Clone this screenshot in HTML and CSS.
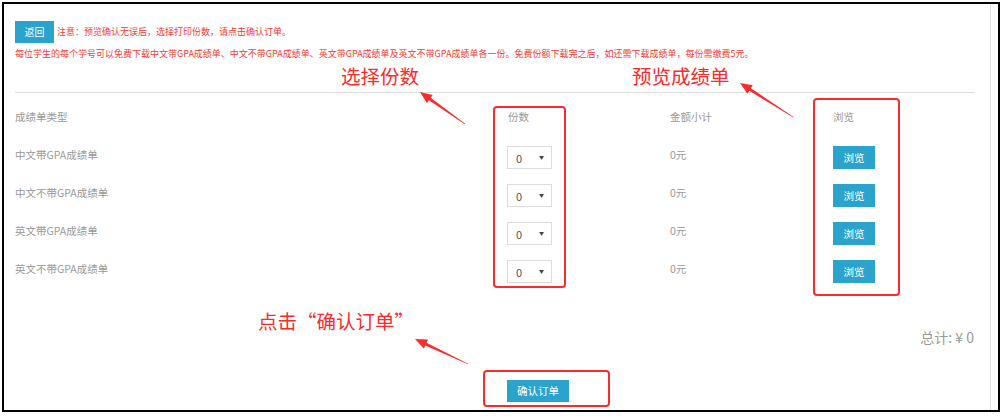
FILE: index.html
```html
<!DOCTYPE html>
<html lang="zh-CN">
<head>
	<meta charset="UTF-8">
	<title>成绩单订单</title>
	<link rel="stylesheet" href="styles.css">
</head>
<body>
	<div class="frame">
		<div class="page">
			<div class="top">
				<a class="btn back">返回</a>
				<span class="tip">注意：预览确认无误后，选择打印份数，请点击确认订单。</span>
			</div>
			<p class="tip notice">每位学生的每个学号可以免费下载中文带GPA成绩单、中文不带GPA成绩单、英文带GPA成绩单及英文不带GPA成绩单各一份。免费份额下载完之后，如还需下载成绩单，每份需缴费5元。</p>

			<div class="list">
				<div class="row head">
					<span>成绩单类型</span>
					<span class="num">份数</span>
					<span>金额小计</span>
					<span>浏览</span>
				</div>
				<div class="row">
					<span>中文带GPA成绩单</span>
					<div class="sel"><select><option>0</option><option>1</option><option>2</option></select></div>
					<span>0元</span>
					<div><a class="btn view">浏览</a></div>
				</div>
				<div class="row">
					<span>中文不带GPA成绩单</span>
					<div class="sel"><select><option>0</option><option>1</option><option>2</option></select></div>
					<span>0元</span>
					<div><a class="btn view">浏览</a></div>
				</div>
				<div class="row">
					<span>英文带GPA成绩单</span>
					<div class="sel"><select><option>0</option><option>1</option><option>2</option></select></div>
					<span>0元</span>
					<div><a class="btn view">浏览</a></div>
				</div>
				<div class="row">
					<span>英文不带GPA成绩单</span>
					<div class="sel"><select><option>0</option><option>1</option><option>2</option></select></div>
					<span>0元</span>
					<div><a class="btn view">浏览</a></div>
				</div>
			</div>

			<div class="total">总计: ¥ 0</div>
			<div class="submit"><a class="btn confirm">确认订单</a></div>
		</div>

		<!-- 标注层 -->
		<div class="mark m1">选择份数</div>
		<div class="mark m2">预览成绩单</div>
		<div class="mark m3">点击“确认订单”</div>
		<svg class="marks" width="994" height="406" viewBox="4 4 994 406">
			<g fill="none" stroke="#f82c2c" stroke-width="2">
				<rect x="494" y="107" width="71" height="180" rx="3"/>
				<rect x="814" y="99" width="85" height="196" rx="3"/>
				<rect x="484" y="371" width="125" height="35" rx="3"/>
			</g>
			<g fill="#f82c2c">
				<polygon points="465.2,123.8 430.7,97.8 432.7,94.9 420,92 426.9,103.1 428.9,100.2 464.8,124.2"/>
				<polygon points="793.2,116.7 750.9,88.2 752.8,85.3 740,83 747.4,93.7 749.3,90.8 792.8,117.3"/>
				<polygon points="468.1,363.7 426.5,342.7 428,339.6 415,339 423.8,348.6 425.3,345.5 467.9,364.3"/>
			</g>
		</svg>
	</div>
</body>
</html>
```

FILE: styles.css
```css
*{
	margin: 0;
	padding: 0;
	box-sizing: border-box;
}
body{
	font-family: "Noto Sans CJK SC", "Noto Sans", sans-serif;
	background: #ffffff;
}
/*外框*/
.frame{
	width: 998px;
	height: 410px;
	margin: 2px;
	border: 2px solid #000000;
	position: relative;
	overflow: hidden;
}
.page{
	width: 987px;
	height: 100%;
	border-right: 1px solid #e3e3e3;
	padding: 17px 16px 0 11px;
}
/*按钮公共样式*/
.btn{
	display: block;
	background: #2aa4cd;
	color: #ffffff;
	text-align: center;
	cursor: pointer;
}
.top{
	display: flex;
	align-items: center;
}
.back{
	width: 39px;
	height: 22px;
	line-height: 22px;
	font-size: 10px;
}
.tip{
	color: #f63a35;
	font-size: 9px;
	line-height: 12px;
}
.top .tip{
	margin-left: 3px;
}
.notice{
	margin-top: 5px;
	padding-bottom: 32px;
	border-bottom: 1px solid #dddddd;
}
/*列表*/
.list{
	margin-top: 5px;
}
.row{
	display: grid;
	grid-template-columns: 492px 163px 163px 1fr;
	align-items: center;
	height: 38px;
	font-size: 10.5px;
	line-height: 1;
	color: #999999;
}
.row.head .num{
	padding-left: 1px;
}
.sel{
	position: relative;
	width: 45px;
	height: 23px;
	margin-top: 5px;
}
.sel select{
	appearance: none;
	-webkit-appearance: none;
	width: 45px;
	height: 23px;
	border: 1px solid #dddddd;
	background: #ffffff;
	padding-left: 8px;
	font-family: inherit;
	font-size: 11px;
	color: #555555;
	outline: none;
}
/*下拉小三角*/
.sel::after{
	content: "▼";
	position: absolute;
	right: 8px;
	top: 8px;
	font-size: 5px;
	color: #444444;
	pointer-events: none;
}
.view{
	width: 42px;
	height: 23px;
	line-height: 23px;
	margin-top: 5px;
	font-size: 10.5px;
}
.total{
	margin-top: 40px;
	text-align: right;
	font-size: 14px;
	line-height: 18px;
	color: #999999;
}
.submit{
	margin-top: 34px;
	padding-left: 492px;
}
.confirm{
	width: 62px;
	height: 22px;
	line-height: 22px;
	font-size: 10.5px;
}
/*红色标注*/
.mark{
	position: absolute;
	color: #f82c2c;
	font-size: 19.5px;
	line-height: 1;
	white-space: nowrap;
}
.m1{
	left: 337px;
	top: 62px;
}
.m2{
	left: 628px;
	top: 62px;
}
.m3{
	left: 254px;
	top: 307px;
}
.marks{
	position: absolute;
	left: 0;
	top: 0;
	pointer-events: none;
}
```
